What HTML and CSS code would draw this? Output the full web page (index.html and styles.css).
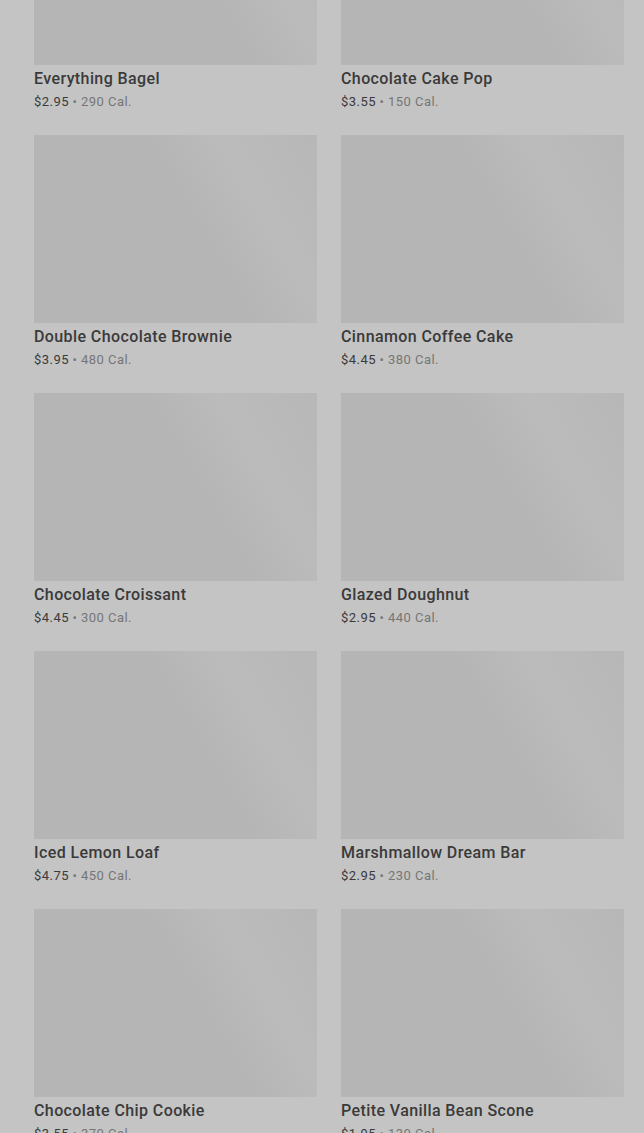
FILE: index.html
```html
<!DOCTYPE html>
<html lang="en">
<head>
    <meta charset="UTF-8">
    <meta name="viewport" content="width=device-width, initial-scale=1.0">
    <title>Bakery</title>
    <link rel="stylesheet" href="styles.css">
</head>
<body>
    <div class="menu">
        <div class="product-grid">
            <div class="product">
                <div class="product-image"></div>
                <div class="product-info">
                    <h3>Everything Bagel</h3>
                    <p><span class="price">$2.95</span> &bull; 290 Cal.</p>
                </div>
            </div>
            <div class="product">
                <div class="product-image"></div>
                <div class="product-info">
                    <h3>Chocolate Cake Pop</h3>
                    <p><span class="price">$3.55</span> &bull; 150 Cal.</p>
                </div>
            </div>
            <div class="product">
                <div class="product-image"></div>
                <div class="product-info">
                    <h3>Double Chocolate Brownie</h3>
                    <p><span class="price">$3.95</span> &bull; 480 Cal.</p>
                </div>
            </div>
            <div class="product">
                <div class="product-image"></div>
                <div class="product-info">
                    <h3>Cinnamon Coffee Cake</h3>
                    <p><span class="price">$4.45</span> &bull; 380 Cal.</p>
                </div>
            </div>
            <div class="product">
                <div class="product-image"></div>
                <div class="product-info">
                    <h3>Chocolate Croissant</h3>
                    <p><span class="price">$4.45</span> &bull; 300 Cal.</p>
                </div>
            </div>
            <div class="product">
                <div class="product-image"></div>
                <div class="product-info">
                    <h3>Glazed Doughnut</h3>
                    <p><span class="price">$2.95</span> &bull; 440 Cal.</p>
                </div>
            </div>
            <div class="product">
                <div class="product-image"></div>
                <div class="product-info">
                    <h3>Iced Lemon Loaf</h3>
                    <p><span class="price">$4.75</span> &bull; 450 Cal.</p>
                </div>
            </div>
            <div class="product">
                <div class="product-image"></div>
                <div class="product-info">
                    <h3>Marshmallow Dream Bar</h3>
                    <p><span class="price">$2.95</span> &bull; 230 Cal.</p>
                </div>
            </div>
            <div class="product">
                <div class="product-image"></div>
                <div class="product-info">
                    <h3>Chocolate Chip Cookie</h3>
                    <p><span class="price">$3.55</span> &bull; 370 Cal.</p>
                </div>
            </div>
            <div class="product">
                <div class="product-image"></div>
                <div class="product-info">
                    <h3>Petite Vanilla Bean Scone</h3>
                    <p><span class="price">$1.95</span> &bull; 130 Cal.</p>
                </div>
            </div>
        </div>
    </div>
</body>
</html>
```

FILE: styles.css
```css
* {
    margin: 0;
    padding: 0;
    box-sizing: border-box;
}

body {
    background-color: #c4c4c4;
    font-family: Roboto, 'Noto Sans', sans-serif;
    color: #3a3a3a;
    overflow: hidden;
}

/* page is shown scrolled part way down the list */
.menu {
    padding: 0 20px 0 34px;
    margin-top: -123px;
}

.product-grid {
    display: grid;
    grid-template-columns: 283px 283px;
    column-gap: 24px;
    row-gap: 23px;
}

.product-image {
    height: 188px;
    background-color: #b5b5b5;
    background-image: linear-gradient(60deg, #b5b5b5 55%, #bbbbbb 75%, #b7b7b7 100%);
}

.product-info {
    padding-top: 2px;
}

.product-info h3 {
    font-size: 16px;
    font-weight: 500;
    line-height: 24px;
    letter-spacing: 0.4px;
    color: #3a3a3a;
}

.product-info p {
    margin-top: 1px;
    font-size: 13px;
    line-height: 20px;
    letter-spacing: 0.45px;
    color: #767676;
}

.price {
    color: #3a3a3a;
}
```
